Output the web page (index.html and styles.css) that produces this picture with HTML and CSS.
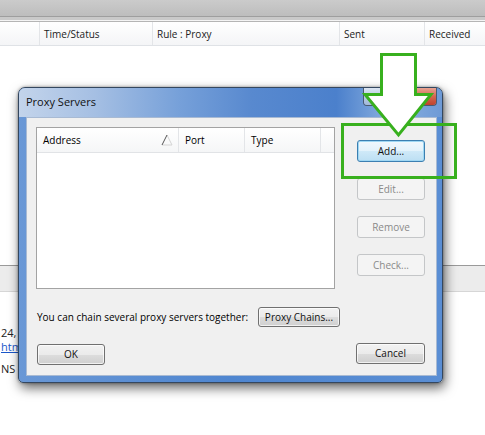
FILE: index.html
```html
<!DOCTYPE html>
<html>
<head>
<meta charset="utf-8">
<link rel="stylesheet" href="styles.css">
</head>
<body>
<div class="app">
  <div class="toolbar"></div>
  <div class="strip"></div>
  <div class="colhead">
    <div class="col c0"></div>
    <div class="col c1">Time/Status</div>
    <div class="col c2">Rule : Proxy</div>
    <div class="col c3">Sent</div>
    <div class="col c4">Received</div>
  </div>
  <div class="logarea"></div>
  <div class="statusband"></div>
  <div class="details">
    <div class="dline">24,</div>
    <div class="dline"><a class="lnk">htm</a></div>
    <div class="dline gap">NS :</div>
  </div>
</div>

<div class="dialog">
  <div class="titlebar">
    <span class="title">Proxy Servers</span>
    <div class="caps">
      <div class="cap cmin"></div>
      <div class="cap cmax"></div>
      <div class="cap cclose"></div>
    </div>
  </div>
  <div class="client">
    <div class="toprow">
      <div class="list">
        <div class="lhead">
          <div class="lcol l1">Address
            <svg class="sort" width="12" height="12" viewBox="0 0 12 12"><path d="M6 1 L11 11 L1 11" stroke="#d4d4d4" stroke-width="1" fill="none"/><path d="M1 11 L6 1" stroke="#555" stroke-width="1" fill="none"/></svg>
          </div>
          <div class="lcol l2">Port</div>
          <div class="lcol l3">Type</div>
          <div class="lcol l4"></div>
        </div>
      </div>
      <div class="btncol">
        <div class="btn hot">Add...</div>
        <div class="btn dis">Edit...</div>
        <div class="btn dis">Remove</div>
        <div class="btn dis">Check...</div>
      </div>
    </div>
    <div class="chainrow">
      <span class="chaintext">You can chain several proxy servers together:</span>
      <div class="btn chain">Proxy Chains...</div>
    </div>
    <div class="bottomrow">
      <div class="btn ok">OK</div>
      <div class="btn cancel">Cancel</div>
    </div>
  </div>
</div>

<div class="highlight"></div>
<svg class="arrow" width="485" height="435" viewBox="0 0 485 435">
  <polygon points="381.5,54.5 415.5,54.5 415.5,94.5 431,94.5 398.5,135 365,94.5 381.5,94.5" fill="#ffffff" stroke="#38b01e" stroke-width="3" stroke-linejoin="miter"/>
</svg>
</body>
</html>
```

FILE: styles.css
```css
* { box-sizing: border-box; }
html, body { margin: 0; padding: 0; }
body {
  width: 485px;
  height: 435px;
  overflow: hidden;
  position: relative;
  background: #ffffff;
  font-family: "Open Sans", "Noto Sans", sans-serif;
  font-size: 10px;
  color: #000;
}
.app { height: 435px; background: #fff; }
.toolbar {
  height: 17px;
  background: linear-gradient(#cbcbcb, #bdbdbd);
  border-bottom: 1px solid #9e9e9e;
}
.strip {
  height: 4px;
  background: #c9c9c9;
  border-bottom: 1px solid #f4f4f4;
}
.colhead {
  display: flex;
  height: 25px;
  background: linear-gradient(#ffffff, #f4f5f7);
  border-top: 1px solid #b5b5b5;
  border-bottom: 1px solid #dfe2e6;
  color: #222;
}
.col {
  line-height: 21px;
  padding-top: 2px;
  padding-left: 4px;
  border-right: 1px solid #e3e5e8;
  white-space: nowrap;
}
.c0 { width: 40px; }
.c1 { width: 113px; }
.c2 { width: 187px; }
.c3 { width: 85px; }
.c4 { flex: 1; border-right: none; }
.logarea { height: 219px; }
.statusband {
  height: 27px;
  background: #ececec;
  border-top: 1px solid #9a9a9a;
  border-bottom: 1px solid #d6d6d6;
}
.details { padding-top: 34px; padding-left: 1px; }
.dline {
  height: 14px;
  line-height: 14px;
  white-space: nowrap;
  font-size: 11px;
  color: #222;
}
.lnk { color: #1a56c9; text-decoration: underline; }
.gap { margin-top: 8px; }

/* dialog */
.dialog {
  position: absolute;
  left: 18px;
  top: 87px;
  width: 425px;
  height: 296px;
  border: 1px solid #34475f;
  border-radius: 7px 7px 5px 5px;
  background: linear-gradient(to right, #6a98d6, #4f86d0 50%, #5a8ed4);
  padding: 0 5px 6px 7px;
  box-shadow: 2px 5px 12px rgba(0,0,0,0.6), 0 0 3px rgba(0,0,0,0.4);
}
.titlebar {
  height: 29px;
  margin: 0 -5px 0 -7px;
  padding-left: 7px;
  display: flex;
  align-items: flex-start;
  border-radius: 6px 6px 0 0;
  background: linear-gradient(to right, #c3d4eb 0%, #a5bfe3 18%, #76a0d9 38%, #5889cf 55%, #4b80cc 75%, #8cb1e0 88%, #6e9ad6 100%);
}
.title {
  font-size: 11px;
  line-height: 28px;
  color: #111;
}
.caps {
  margin-left: auto;
  margin-right: 5px;
  display: flex;
  height: 18px;
  border: 1px solid #4a5a70;
  border-top: none;
  border-radius: 0 0 4px 4px;
  overflow: hidden;
}
.cap { height: 17px; }
.cmin, .cmax {
  width: 24px;
  background: linear-gradient(#dbe5f2, #b8cbe4 50%, #a2b8d8);
  border-right: 1px solid #6a7d98;
}
.cclose {
  width: 24px;
  background: linear-gradient(#e8a493, #d4664f 50%, #c0432c);
}
.client {
  height: 259px;
  background: #f0f0f0;
  border: 1px solid #a8bad3;
  padding: 9px 0 0 9px;
  display: flex;
  flex-direction: column;
}
.toprow { display: flex; }
.list {
  width: 299px;
  height: 162px;
  background: #fff;
  border: 1px solid #a3a3a3;
}
.lhead {
  display: flex;
  height: 25px;
  background: linear-gradient(#ffffff, #f5f6f7);
  border-bottom: 1px solid #e1e3e6;
}
.lcol {
  line-height: 25px;
  padding-left: 6px;
  border-right: 1px solid #e3e5e8;
  white-space: nowrap;
  position: relative;
}
.l1 { width: 142px; }
.l2 { width: 66px; }
.l3 { width: 76px; }
.l4 { flex: 1; border-right: none; }
.sort { position: absolute; left: 124px; top: 6px; }
.btncol {
  margin-left: 22px;
  padding-top: 13px;
  display: flex;
  flex-direction: column;
  gap: 16px;
}
.btn {
  width: 68px;
  height: 22px;
  border: 1px solid #707070;
  border-radius: 3px;
  background: linear-gradient(#f2f2f2 0%, #ebebeb 50%, #dddddd 51%, #cfcfcf 100%);
  text-align: center;
  line-height: 20px;
  color: #111;
  box-shadow: inset 0 0 0 1px rgba(255,255,255,0.7);
}
.hot {
  border-color: #3c7fb1;
  background: linear-gradient(#f1f8fd 0%, #e3f2fb 50%, #cfe9f8 51%, #bcdff3 100%);
  box-shadow: inset 0 0 0 1px #9fd7f3;
}
.dis {
  border-color: #c4c6c8;
  background: #f4f4f4;
  color: #8a8a8a;
  box-shadow: none;
}
.chainrow {
  display: flex;
  align-items: center;
  margin-top: 18px;
  height: 20px;
}
.chaintext { width: 222px; white-space: nowrap; padding-left: 1px; }
.chain { width: 82px; height: 20px; line-height: 18px; }
.bottomrow {
  display: flex;
  justify-content: space-between;
  margin-top: 17px;
  padding: 0 11px 0 1px;
}
.ok { height: 21px; line-height: 19px; }
.cancel { width: 69px; height: 21px; line-height: 19px; margin-top: -1px; }

.highlight {
  position: absolute;
  left: 341px;
  top: 123px;
  width: 116px;
  height: 56px;
  border: 3px solid #38b01e;
}
.arrow { position: absolute; left: 0; top: 0; pointer-events: none; }
```
